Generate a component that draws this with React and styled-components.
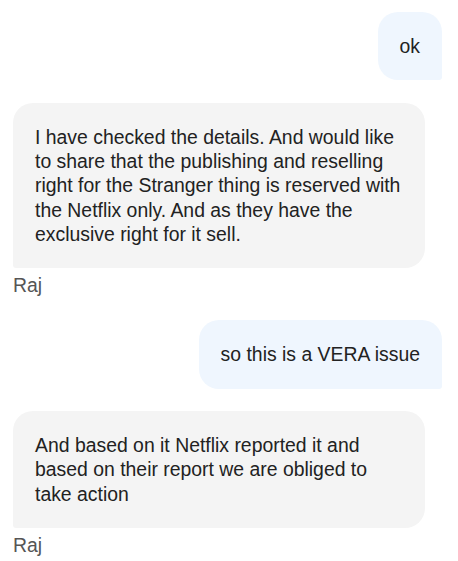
import styled, { createGlobalStyle } from 'styled-components';

const GlobalStyle = createGlobalStyle`
  body {
    margin: 0;
    background: #ffffff;
    font-family: "Liberation Sans", Arial, sans-serif;
  }
`;

const Thread = styled.div`
  display: flex;
  flex-direction: column;
  gap: 22.6px;
  padding: 12px 16px 0 13px;
`;

const Group = styled.div`
  display: flex;
  flex-direction: column;
  align-items: ${p => (p.$mine ? 'flex-end' : 'flex-start')};
`;

const Bubble = styled.div`
  box-sizing: border-box;
  max-width: 412px;
  padding: 22px;
  font-size: 19.4px;
  line-height: 24.3px;
  color: #222222;
  background: ${p => (p.$mine ? '#eff6fe' : '#f4f4f4')};
  border-radius: ${p => (p.$mine ? '20px 20px 3px 20px' : '20px 20px 20px 3px')};
`;

const Sender = styled.div`
  margin-top: 5px;
  font-size: 19.4px;
  line-height: 24.3px;
  color: #555555;
`;

const messages = [
  { mine: true, text: 'ok' },
  {
    mine: false,
    text: 'I have checked the details. And would like to share that the publishing and reselling right for the Stranger thing is reserved with the Netflix only. And as they have the exclusive right for it sell.',
    from: 'Raj',
  },
  { mine: true, text: 'so this is a VERA issue' },
  {
    mine: false,
    text: 'And based on it Netflix reported it and based on their report we are obliged to take action',
    from: 'Raj',
  },
];

export default function App() {
  return (
    <>
      <GlobalStyle />
      <Thread>
        {messages.map((m, i) => (
          <Group key={i} $mine={m.mine}>
            <Bubble $mine={m.mine}>{m.text}</Bubble>
            {m.from && <Sender>{m.from}</Sender>}
          </Group>
        ))}
      </Thread>
    </>
  );
}
